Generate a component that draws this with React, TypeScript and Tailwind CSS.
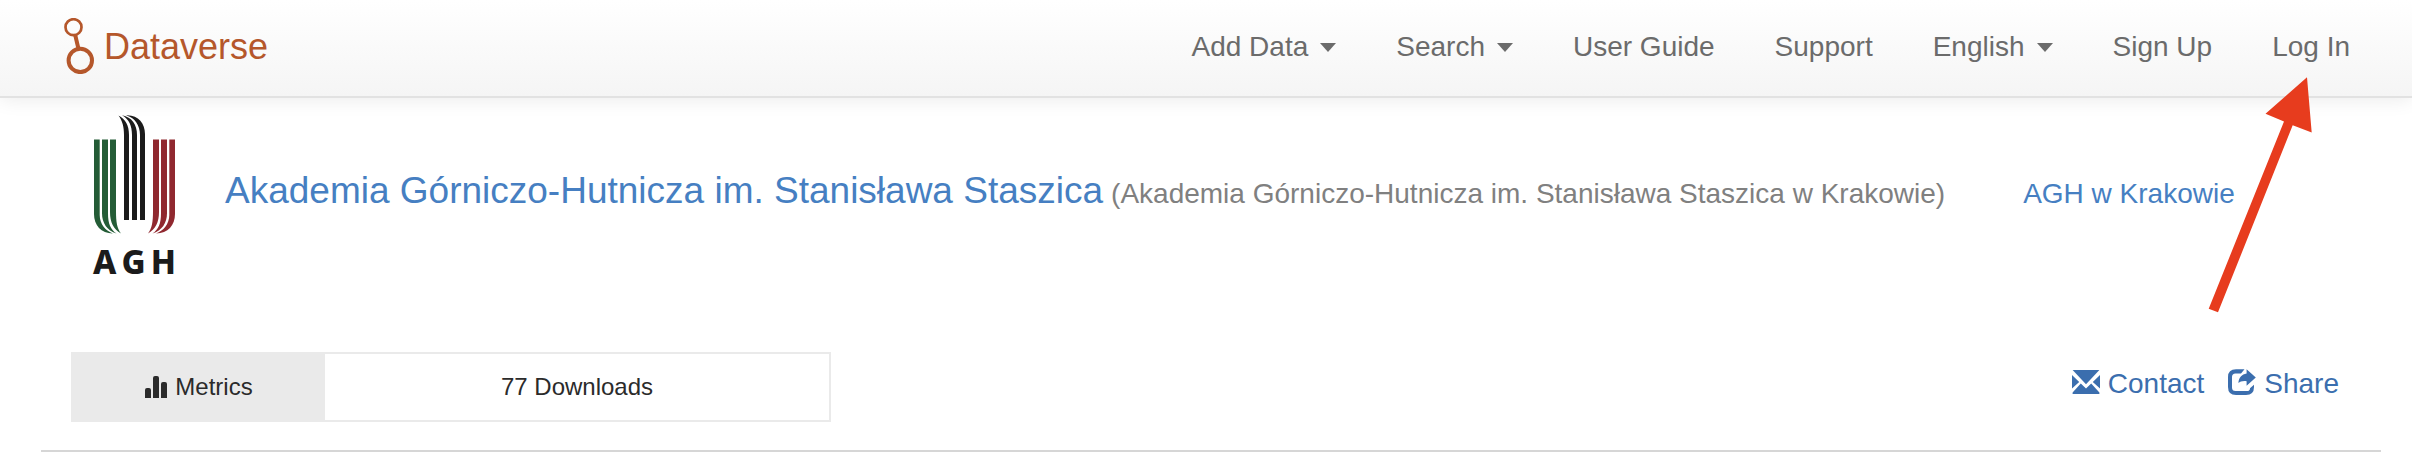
const FONT = 'font-["Helvetica_Neue","Liberation_Sans",Arial,sans-serif]';

type NavItem = { label: string; menu?: boolean };

const NAV: NavItem[] = [
  { label: "Add Data", menu: true },
  { label: "Search", menu: true },
  { label: "User Guide" },
  { label: "Support" },
  { label: "English", menu: true },
  { label: "Sign Up" },
  { label: "Log In" },
];

function Caret() {
  return (
    <svg viewBox="0 0 16 9" className="h-[9px] w-4" fill="currentColor" aria-hidden="true">
      <path d="M0 0h16L8 9z" />
    </svg>
  );
}

function DataverseMark() {
  return (
    <svg viewBox="0 0 30 56" className="h-14 w-[30px]" fill="none" stroke="#b5572b" aria-hidden="true">
      <circle cx="9.5" cy="9.2" r="8" strokeWidth="2.7" />
      <path d="M11.2 17l3.2 13.5" strokeWidth="4" />
      <circle cx="16.3" cy="42.4" r="11.7" strokeWidth="4" />
    </svg>
  );
}

function AghMark() {
  return (
    <svg viewBox="0 0 81 119" className="h-[119px] w-[81px]" aria-hidden="true">
      <g fill="#245c36">
        <path d="M0 24.500h5.700v75.500c0 9 6 16 13.300 18.500C7 118.500 0 110 0 99z" />
        <path d="M8 24.500h6v74c0 10 2.500 16 8.500 20C13 115.500 8 108 8 98z" />
        <path d="M16 24.500h6v72c0 10 1 17 5 22C19.500 114.500 16 107 16 97z" />
      </g>
      <g fill="#90282f">
        <path d="M81 24.500h-5.700v75.500c0 9-6 16-13.300 18.500 12 0 19-8.500 19-19.500z" />
        <path d="M73 24.500h-6v74c0 10-2.500 16-8.500 20 9.500-3 14.500-10.500 14.500-20.500z" />
        <path d="M65 24.500h-6v72c0 10-1 17-5 22 7.500-4 11-11.500 11-21.500z" />
      </g>
      <g fill="#1b1b1b">
        <path d="M30 105V20c0-8-1.500-14-5.500-19.500C31.500 4.500 35 10 35 20v85z" />
        <path d="M38 105V20C38 11 35 4 28 .300 38 2 43 10 43 20v85z" />
        <path d="M46 105V20C46 10 41 3 32 .200 44-.500 51 8 51 19v86z" />
      </g>
    </svg>
  );
}

function BarsIcon() {
  return (
    <svg viewBox="0 0 22 22" className="h-[22px] w-[22px]" fill="currentColor" aria-hidden="true">
      <path d="M0 22v-8q0-2 2-2h2q2 0 2 2v8zM8 22V2q0-2 2-2h2q2 0 2 2v20zM16 22V8q0-2 2-2h2q2 0 2 2v14z" />
    </svg>
  );
}

function EnvelopeIcon() {
  return (
    <svg viewBox="0 0 28 24" className="mb-1 h-6 w-7" fill="currentColor" aria-hidden="true">
      <path d="M.600 0h26.800L14 14.200z" />
      <path d="M0 5l7.200 7L0 18.600zM28 5l-7.200 7 7.200 6.600z" />
      <path d="M8.800 13.600L14 18.500l5.200-4.900L27.400 22.500V24H.600v-1.500z" />
    </svg>
  );
}

function ShareIcon() {
  return (
    <svg viewBox="0 0 28 26" className="mb-1 h-[26px] w-7" fill="currentColor" aria-hidden="true">
      <path d="M16.500.200H8Q0 .200 0 8v10q0 8 8 8h10q8 0 8-8v-2.200l-4 3.400q0 2.800-3 2.800H7.500Q4 22 4 18.500V8q0-3.600 3.500-3.600H13z" />
      <path d="M18.600.200L27.800 8.400l-9.200 8.400v-4.600c-4-.600-6.600.600-8.200 1.800.4-5.600 3.400-8.800 8.200-9.600z" />
    </svg>
  );
}

export default function App() {
  return (
    <div className={`relative bg-white text-[28px] leading-10 ${FONT}`}>
      <header className="flex items-center justify-between border-b-2 border-[#e2e2e2] bg-linear-to-b from-white to-[#f5f5f5] pt-[18px] pr-8 pb-[22px] pl-16 shadow-[0_2px_18px_rgba(0,0,0,0.08)]">
        <a href="#home" className="flex items-center gap-[10px] text-4xl leading-10 text-[#b5572b]">
          <DataverseMark />
          <span className="pt-0.5">Dataverse</span>
        </a>
        <nav aria-label="Main" className="flex items-center pt-0.5 text-[#6b6b6b]">
          {NAV.map((item) =>
            item.menu ? (
              <button key={item.label} type="button" aria-haspopup="menu" className="flex items-center gap-3 px-[30px]">
                {item.label}
                <Caret />
              </button>
            ) : (
              <a key={item.label} href="#nav" className="px-[30px]">
                {item.label}
              </a>
            ),
          )}
        </nav>
      </header>

      <main className="mr-[31px] ml-[41px]">
        <section className="flex items-center pt-[17px] pl-[52px]">
          <a href="#agh" className="flex w-[83px] flex-col items-center text-[#1b1b1b]">
            <AghMark />
            <span className='mt-2 flex w-full justify-between font-["Noto_Sans",sans-serif] text-[33px] leading-10 font-extrabold'>
              <span>A</span>
              <span>G</span>
              <span>H</span>
            </span>
          </a>
          <h1 className="ml-[49px] flex items-baseline gap-2 pb-3">
            <a href="#collection" className="text-[37px] leading-10 text-[#467fc2]">
              Akademia Górniczo-Hutnicza im. Stanisława Staszica
            </a>
            <span className="text-[#808080]">(Akademia Górniczo-Hutnicza im. Stanisława Staszica w Krakowie)</span>
            <a href="#affiliation" className="ml-[70px] text-[#467fc2]">
              AGH w Krakowie
            </a>
          </h1>
        </section>

        <section className="mt-[70px] flex items-center justify-between border-b-2 border-[#d6d6d6] pr-[42px] pb-7 pl-[30px]">
          <div className="flex w-[760px] border-2 border-[#eaeaea] text-2xl leading-8 text-[#2b2b2b]">
            <div className="flex w-[252px] items-center justify-center gap-2 bg-[#eaeaea] py-[17px]">
              <BarsIcon />
              <span>Metrics</span>
            </div>
            <div className="flex-1 py-[17px] text-center">77 Downloads</div>
          </div>
          <div className="flex gap-6 pb-1.5 text-[#3b6eae]">
            <button type="button" className="flex items-center gap-2">
              <EnvelopeIcon />
              Contact
            </button>
            <button type="button" className="flex items-center gap-2">
              <ShareIcon />
              Share
            </button>
          </div>
        </section>
      </main>

      <svg
        viewBox="0 0 120 250"
        className="pointer-events-none absolute top-[70px] right-[92px] h-[250px] w-[120px]"
        fill="#e73c1e"
        aria-hidden="true"
      >
        <path d="M107 7.300L65.500 43.700L84 51.500L8.700 238.700L18 242.300L92.700 55.300L111.700 62.500z" />
      </svg>
    </div>
  );
}
